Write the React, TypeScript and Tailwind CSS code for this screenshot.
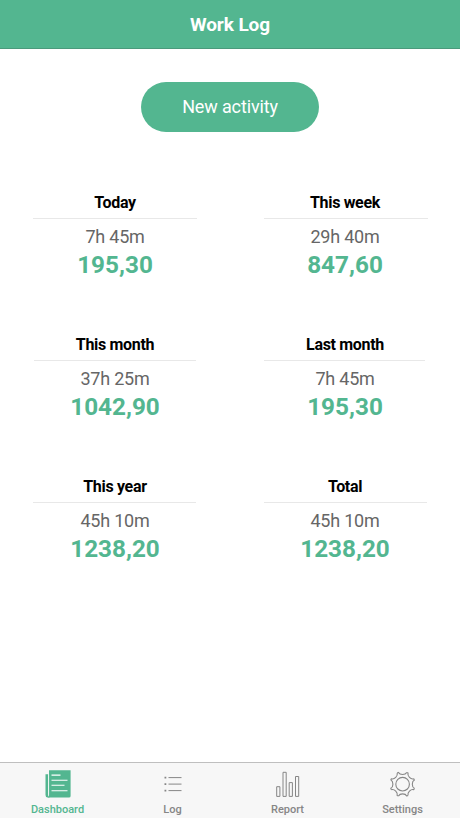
import { useState } from 'react';

interface Stat {
  label: string;
  time: string;
  amount: string;
  line: string;
}

const stats: Stat[] = [
  { label: 'Today', time: '7h 45m', amount: '195,30', line: 'w-[164px]' },
  { label: 'This week', time: '29h 40m', amount: '847,60', line: 'w-[164px] ml-0.5' },
  { label: 'This month', time: '37h 25m', amount: '1042,90', line: 'w-[162px]' },
  { label: 'Last month', time: '7h 45m', amount: '195,30', line: 'w-[161px] mr-px' },
  { label: 'This year', time: '45h 10m', amount: '1238,20', line: 'w-[163px] mr-px' },
  { label: 'Total', time: '45h 10m', amount: '1238,20', line: 'w-[163px] ml-px' },
];

function DashboardIcon() {
  return (
    <svg viewBox="0 0 28 28" className="w-7 h-7">
      <path d="M5 0.3h21.6v25.7q0 1.6-1.6 1.6H3.6q1.4-.4 1.4-2z" fill="currentColor" />
      <path d="M4.2 4.3H1.5v20.7q0 2.6 2.3 2.6h2L4.2 26z" fill="currentColor" />
      <path d="M4.6 4.3v20.5" stroke="#fff" strokeWidth=".6" />
      <path d="M7.5 5.1h9M7.5 10.3h16M7.5 15.3h13M7.5 20.7h16" stroke="#fff" strokeWidth="1.1" />
    </svg>
  );
}

function LogIcon() {
  return (
    <svg viewBox="0 0 28 28" className="w-7 h-7" fill="none" stroke="currentColor">
      <path d="M9.5 7.6h13M9.500 14.100h13M9.500 20.600h13" strokeWidth="1" />
      <path d="M5.500 7.600h1.800M5.500 14.100h1.800M5.500 20.600h1.800" strokeWidth="1.800" />
    </svg>
  );
}

function ReportIcon() {
  return (
    <svg viewBox="0 0 28 28" className="w-7 h-7" fill="none" stroke="currentColor" strokeWidth="1">
      <path d="M2.7 16.7h3.2v9.7H2.7zM9 2.300h3.200v24.100H9zM15.200 12.600h3.200v13.800h-3.200zM21.500 6.500h3.200v19.900h-3.200z" />
    </svg>
  );
}

function SettingsIcon() {
  return (
    <svg viewBox="-13.6 -14.2 28 28" className="w-7 h-7" fill="none" stroke="currentColor" strokeWidth="1.1" strokeLinejoin="round">
      <circle r="6.8" />
      {[0, 45, 90, 135, 180, 225, 270, 315].map((angle) => (
        <path
          key={angle}
          d="M-5.5 -11.2L-4.1 -11.8C-2.7 -9 2.7 -9 4.1 -11.8"
          transform={`rotate(${angle})`}
        />
      ))}
    </svg>
  );
}

const tabs = [
  { id: 'dashboard', name: 'Dashboard', icon: DashboardIcon },
  { id: 'log', name: 'Log', icon: LogIcon },
  { id: 'report', name: 'Report', icon: ReportIcon },
  { id: 'settings', name: 'Settings', icon: SettingsIcon },
];

export default function App() {
  const [activeTab, setActiveTab] = useState('dashboard');

  return (
    <div className="h-screen flex flex-col bg-white font-['Roboto',sans-serif]">
      <header className="h-[49px] shrink-0 flex items-center justify-center bg-[#53b690] border-b border-[#4b9a7c]">
        <h1 className="pt-[2px] text-[19px] leading-6 font-bold tracking-[-0.005em] text-white">Work Log</h1>
      </header>

      <main className="flex-1 flex flex-col items-center">
        <button className="mt-[33px] w-[178px] h-[50px] rounded-full bg-[#53b690] text-white text-lg tracking-[-0.008em]">
          New activity
        </button>

        <div className="mt-[59px] w-full grid grid-cols-2">
          {stats.map((stat) => (
            <section key={stat.label} className="h-[142px] flex flex-col items-center text-center">
              <h2 className="h-[27px] text-base leading-6 font-bold tracking-[-0.02em] text-black">{stat.label}</h2>
              <div className={`h-px bg-[#e8e8e8] ${stat.line}`} />
              <p className="mt-[6px] text-lg leading-6 tracking-[-0.012em] text-[#666]">{stat.time}</p>
              <p className="text-[24.3px] leading-8 font-bold text-[#53b690]">{stat.amount}</p>
            </section>
          ))}
        </div>
      </main>

      <nav className="h-14 shrink-0 grid grid-cols-4 bg-[#f7f7f7] border-t border-[#bfbfbf]">
        {tabs.map((tab) => {
          const Icon = tab.icon;
          return (
            <button
              key={tab.id}
              onClick={() => setActiveTab(tab.id)}
              className={`flex flex-col items-center pt-[7px] ${activeTab === tab.id ? 'text-[#53b690]' : 'text-[#868686]'}`}
            >
              <Icon />
              <span className="mt-1 text-[11px] leading-4 font-medium">{tab.name}</span>
            </button>
          );
        })}
      </nav>
    </div>
  );
}
